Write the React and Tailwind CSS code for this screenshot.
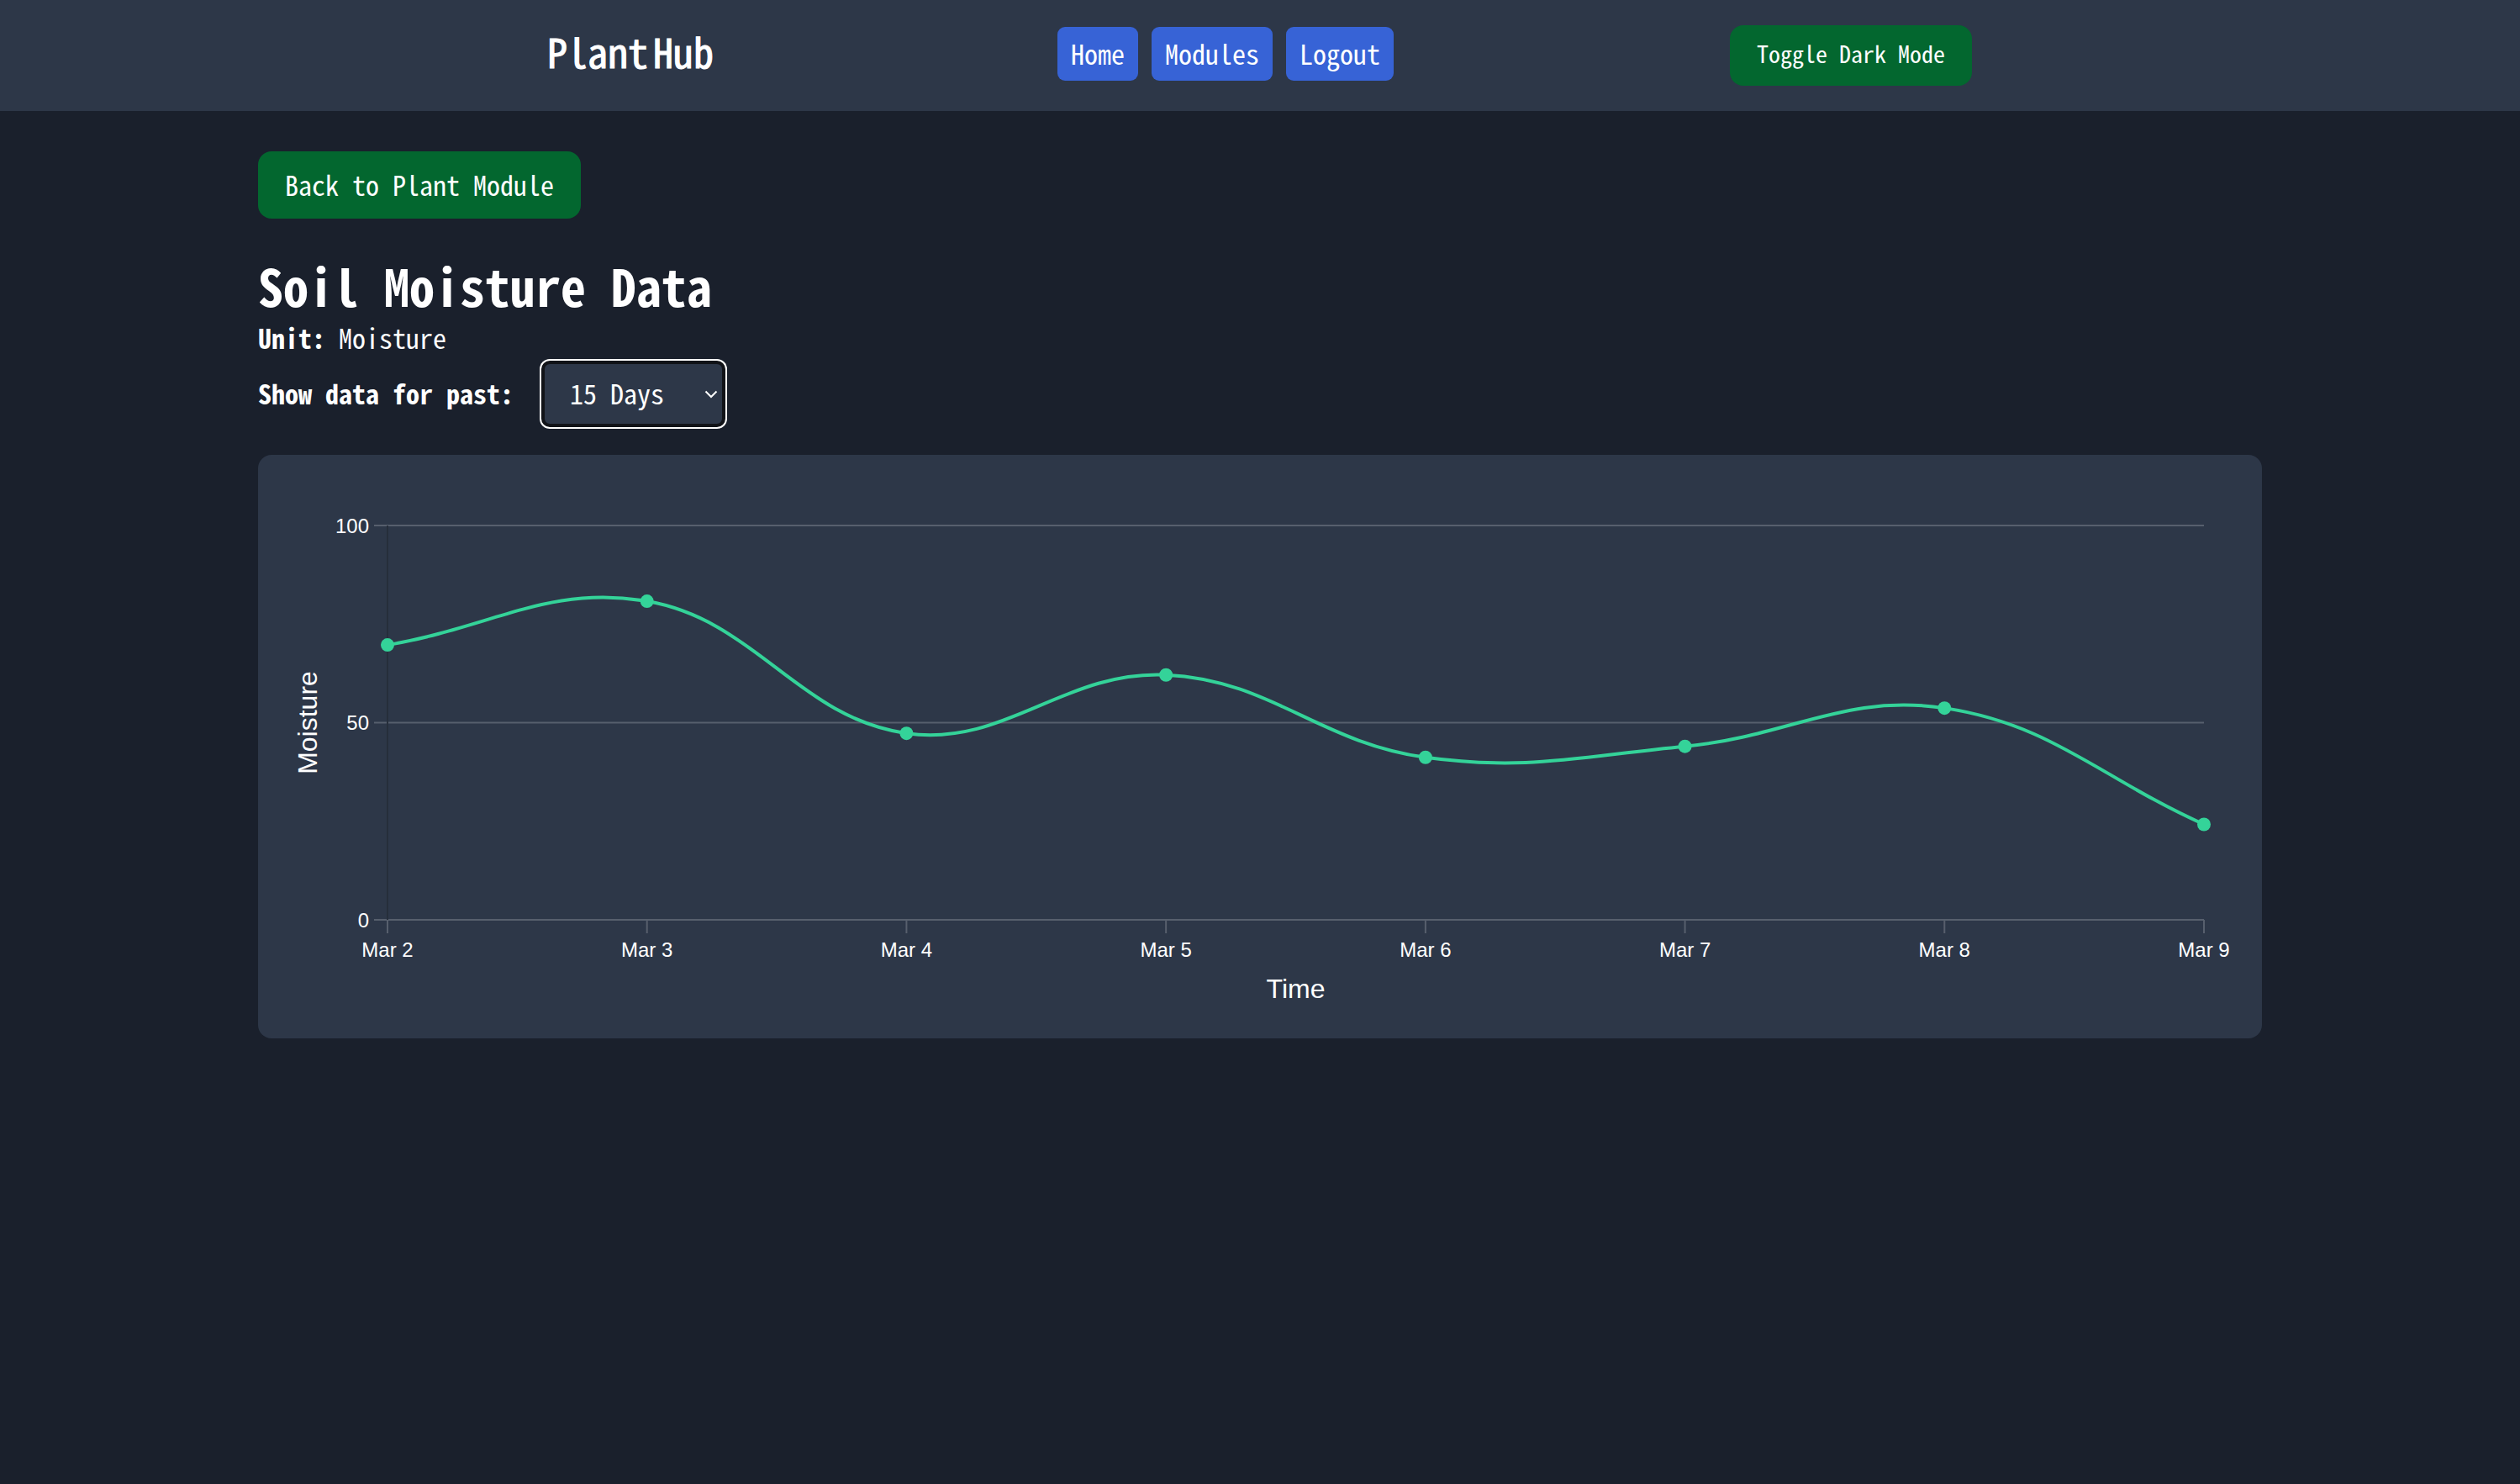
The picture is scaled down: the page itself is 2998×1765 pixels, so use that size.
import React, { useState } from 'react';

const MONO = "'Noto Sans Mono CJK SC', 'Noto Sans Mono CJK JP', 'Liberation Mono', monospace";
const SANS = "'Liberation Sans', Arial, sans-serif";

const points = [
  { label: 'Mar 2', value: 69.7 },
  { label: 'Mar 3', value: 80.8 },
  { label: 'Mar 4', value: 47.3 },
  { label: 'Mar 5', value: 62.1 },
  { label: 'Mar 6', value: 41.2 },
  { label: 'Mar 7', value: 44.0 },
  { label: 'Mar 8', value: 53.7 },
  { label: 'Mar 9', value: 24.2 },
];

// chart area inside the svg
const W = 2320;
const H = 630;
const LEFT = 122;
const RIGHT = 2283;
const TOP = 52;
const BOTTOM = 521;

const xAt = (i) => LEFT + ((RIGHT - LEFT) * i) / (points.length - 1);
const yAt = (v) => BOTTOM - ((BOTTOM - TOP) * v) / 100;

// same spline as chart.js with tension 0.4
function controlPoints(pts, t) {
  return pts.map((cur, i) => {
    const prev = pts[i - 1] || cur;
    const next = pts[i + 1] || cur;
    const d01 = Math.hypot(cur.x - prev.x, cur.y - prev.y);
    const d12 = Math.hypot(next.x - cur.x, next.y - cur.y);
    const s01 = d01 / (d01 + d12) || 0;
    const s12 = d12 / (d01 + d12) || 0;
    const fa = t * s01;
    const fb = t * s12;
    return {
      prev: { x: cur.x - fa * (next.x - prev.x), y: cur.y - fa * (next.y - prev.y) },
      next: { x: cur.x + fb * (next.x - prev.x), y: cur.y + fb * (next.y - prev.y) },
    };
  });
}

function MoistureChart() {
  const pts = points.map((p, i) => ({ x: xAt(i), y: yAt(p.value) }));
  const cps = controlPoints(pts, 0.4);
  let d = `M ${pts[0].x} ${pts[0].y}`;
  for (let i = 1; i < pts.length; i++) {
    const a = cps[i - 1].next;
    const b = cps[i].prev;
    d += ` C ${a.x} ${a.y}, ${b.x} ${b.y}, ${pts[i].x} ${pts[i].y}`;
  }

  return (
    <svg width={W} height={H} viewBox={`0 0 ${W} ${H}`} style={{ fontFamily: SANS }}>
      {[100, 50, 0].map((v) => (
        <g key={v}>
          <line x1={LEFT - 16} x2={RIGHT} y1={yAt(v)} y2={yAt(v)} stroke="#575f6d" strokeWidth="2" />
          <text x={LEFT - 22} y={yAt(v) + 8.5} fill="#ffffff" fontSize="24" textAnchor="end">
            {v}
          </text>
        </g>
      ))}
      <line x1={LEFT} x2={LEFT} y1={TOP} y2={BOTTOM} stroke="#262e3b" strokeWidth="2" />
      {points.map((p, i) => (
        <g key={p.label}>
          <line x1={xAt(i)} x2={xAt(i)} y1={BOTTOM} y2={BOTTOM + 16} stroke="#575f6d" strokeWidth="2" />
          <text x={xAt(i)} y={BOTTOM + 44} fill="#ffffff" fontSize="24" textAnchor="middle">
            {p.label}
          </text>
        </g>
      ))}
      <text x={(LEFT + RIGHT) / 2} y={614} fill="#ffffff" fontSize="32" textAnchor="middle">
        Time
      </text>
      <text transform={`translate(38 ${yAt(50)}) rotate(-90)`} fill="#ffffff" fontSize="32" textAnchor="middle">
        Moisture
      </text>
      <path d={d} fill="none" stroke="#34d399" strokeWidth="4" />
      {pts.map((p, i) => (
        <circle key={i} cx={p.x} cy={p.y} r="8" fill="#34d399" />
      ))}
    </svg>
  );
}

function App() {
  const [days, setDays] = useState('15');

  return (
    <div className="min-h-screen bg-[#1a202c] text-white" style={{ fontFamily: MONO }}>
      <nav className="h-[132px] bg-[#2d3748]">
        <div className="flex h-full items-center pl-[651px]">
          <div className="pb-[12px] text-[48px] leading-[64px] [word-spacing:-18px] [-webkit-text-stroke:1px_#ffffff]">
            Plant Hub
          </div>
          <div className="mb-[4px] ml-[409px] flex gap-[16px]">
            <button className="h-[64px] rounded-[9px] bg-[#3763d6] px-[16px] pb-[2px] text-[32px] leading-[48px]">Home</button>
            <button className="h-[64px] rounded-[9px] bg-[#3763d6] px-[16px] pb-[2px] text-[32px] leading-[48px]">Modules</button>
            <button className="h-[64px] rounded-[9px] bg-[#3763d6] px-[16px] pb-[2px] text-[32px] leading-[48px]">Logout</button>
          </div>
          <button className="ml-[400px] h-[72px] rounded-[16px] bg-[#03672f] px-[32px] pb-[6px] text-[28px] leading-[40px]">
            Toggle Dark Mode
          </button>
        </div>
      </nav>

      <main className="mx-auto w-[2384px] pt-[48px]">
        <button className="h-[80px] rounded-[16px] bg-[#03672f] px-[32px] pb-[3px] text-[32px] leading-[48px]">
          Back to Plant Module
        </button>

        <h1 className="mt-[43px] text-[60px] font-bold leading-[72px]">Soil Moisture Data</h1>
        <p className="mt-[2px] text-[32px] leading-[48px]">
          <span className="font-bold">Unit:</span> Moisture
        </p>

        <div className="mt-[4px] flex items-center gap-[33px]">
          <label className="pb-[3px] text-[32px] font-bold leading-[48px]">Show data for past:</label>
          <div className="relative">
            <select
              value={days}
              onChange={(e) => setDays(e.target.value)}
              className="h-[79px] w-[219px] appearance-none rounded-[10px] border-4 border-[#111318] bg-[#2d3748] pb-[3px] pl-[30px] text-[32px] text-white outline-none ring-2 ring-white"
              style={{ fontFamily: MONO }}
            >
              <option value="1">1 Day</option>
              <option value="7">7 Days</option>
              <option value="15">15 Days</option>
              <option value="30">30 Days</option>
            </select>
            <svg
              className="pointer-events-none absolute right-[9px] top-[35px]"
              width="16"
              height="10"
              viewBox="0 0 16 10"
              fill="none"
            >
              <path d="M1.5 1.5 L8 8 L14.5 1.5" stroke="#ffffff" strokeWidth="2" />
            </svg>
          </div>
        </div>

        <section className="mt-[33px] rounded-[16px] bg-[#2d3748] p-[32px]">
          <MoistureChart />
        </section>
      </main>
    </div>
  );
}

export default App;
